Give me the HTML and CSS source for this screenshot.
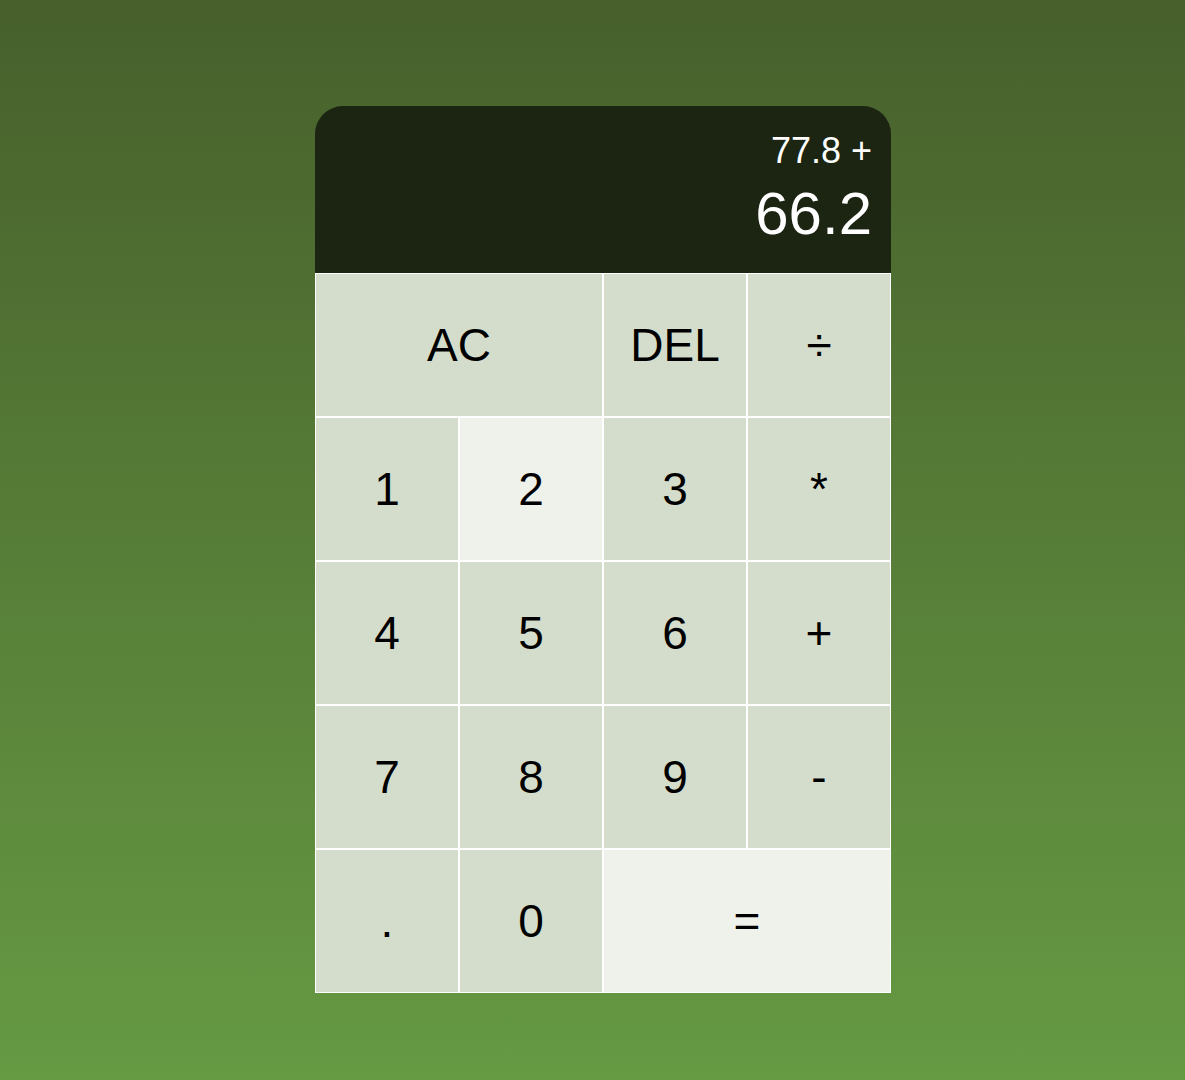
FILE: index.html
```html
<!DOCTYPE html>
<html lang="en">
<head>
<meta charset="utf-8">
<title>Calculator</title>
<link rel="stylesheet" href="styles.css">
</head>
<body>
<div class="calculator">
  <div class="output">
    <div class="previous">77.8 +</div>
    <div class="current">66.2</div>
  </div>
  <button class="key span-two">AC</button>
  <button class="key">DEL</button>
  <button class="key">÷</button>
  <button class="key">1</button>
  <button class="key light">2</button>
  <button class="key">3</button>
  <button class="key">*</button>
  <button class="key">4</button>
  <button class="key">5</button>
  <button class="key">6</button>
  <button class="key">+</button>
  <button class="key">7</button>
  <button class="key">8</button>
  <button class="key">9</button>
  <button class="key">-</button>
  <button class="key">.</button>
  <button class="key">0</button>
  <button class="key span-two light">=</button>
</div>
</body>
</html>
```
FILE: styles.css
```css
* {
  box-sizing: border-box;
}

html, body {
  margin: 0;
  padding: 0;
}

body {
  min-height: 100vh;
  background: linear-gradient(to bottom, #47602c, #669a43);
  display: flex;
  justify-content: center;
  align-items: flex-start;
  padding-top: 106px;
  padding-left: 21px;
  font-family: "Liberation Sans", Arial, sans-serif;
}

.calculator {
  display: grid;
  grid-template-columns: repeat(4, 144px);
  grid-template-rows: 167px repeat(5, 144px);
}

.output {
  grid-column: 1 / -1;
  background: #1c2412;
  border-radius: 28px 28px 0 0;
  display: flex;
  flex-direction: column;
  align-items: flex-end;
  justify-content: space-around;
  padding: 14px 19px 14px 14px;
  color: #fff;
}

.previous {
  font-size: 36px;
  line-height: 1;
  margin-top: 6px;
}

.current {
  font-size: 60px;
  line-height: 1;
  margin-bottom: 8px;
}

.key {
  font-family: "Liberation Sans", Arial, sans-serif;
  font-size: 46px;
  color: #000;
  border: 1.5px solid #fff;
  outline: none;
  background: #d4ddcc;
  padding: 0;
  cursor: pointer;
}

.key.light {
  background: #eff2ea;
}

.span-two {
  grid-column: span 2;
}
```
